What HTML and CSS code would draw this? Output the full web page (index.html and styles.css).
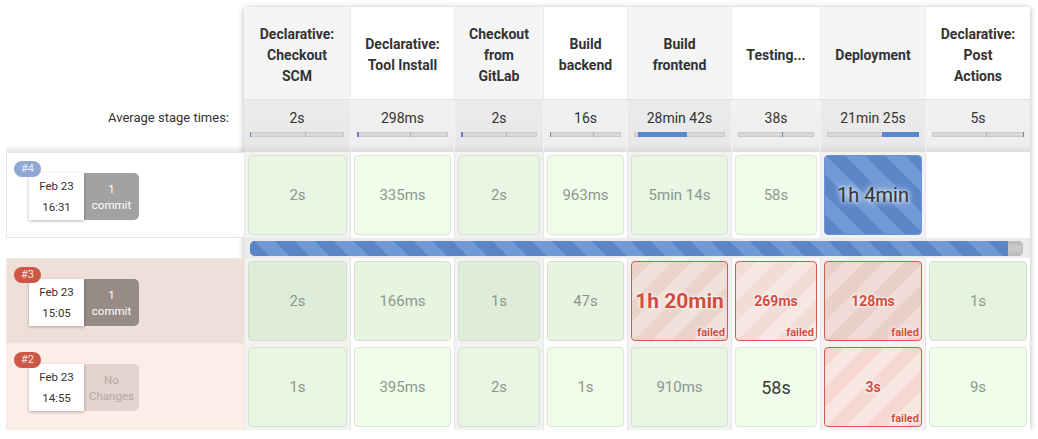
FILE: index.html
```html
<!DOCTYPE html>
<html lang="en">
<head>
<meta charset="utf-8">
<title>Stage View</title>
<link rel="stylesheet" href="styles.css">
</head>
<body>
<div class="page">
  <div class="side">
    <div class="side-head"></div>
    <div class="side-avg">Average stage times:</div>
    <div class="run run-running">
      <span class="badge badge-running">#4</span>
      <div class="date"><span>Feb 23</span><span>16:31</span></div>
      <div class="changes changes-running">1<br>commit</div>
    </div>
    <div class="side-gap"></div>
    <div class="run run-failed">
      <span class="badge badge-failed">#3</span>
      <div class="date"><span>Feb 23</span><span>15:05</span></div>
      <div class="changes changes-failed">1<br>commit</div>
    </div>
    <div class="run run-failed2">
      <span class="badge badge-failed">#2</span>
      <div class="date"><span>Feb 23</span><span>14:55</span></div>
      <div class="changes changes-none">No<br>Changes</div>
    </div>
  </div>

  <div class="stages">
    <div class="th odd">Declarative: Checkout SCM</div>
    <div class="th even">Declarative: Tool Install</div>
    <div class="th odd">Checkout from GitLab</div>
    <div class="th even">Build backend</div>
    <div class="th odd">Build frontend</div>
    <div class="th even">Testing...</div>
    <div class="th odd">Deployment</div>
    <div class="th even th-last">Declarative: Post Actions</div>

    <div class="avg odd"><span>2s</span><div class="bar"><i class="fill" style="left:0;width:1.5%"></i><i class="tick" style="left:58%"></i></div></div>
    <div class="avg even"><span>298ms</span><div class="bar"><i class="fill" style="left:0;width:2%"></i><i class="tick" style="left:58%"></i></div></div>
    <div class="avg odd"><span>2s</span><div class="bar"><i class="fill" style="left:0;width:2%"></i><i class="tick" style="left:59%"></i></div></div>
    <div class="avg even"><span>16s</span><div class="bar"><i class="fill" style="left:0;width:2%"></i><i class="tick" style="left:60%"></i></div></div>
    <div class="avg odd"><span>28min 42s</span><div class="bar"><i class="fill" style="left:4%;width:54%"></i></div></div>
    <div class="avg even"><span>38s</span><div class="bar"><i class="tick tick-blue" style="left:58%"></i></div></div>
    <div class="avg odd"><span>21min 25s</span><div class="bar"><i class="fill" style="left:60%;width:40%"></i></div></div>
    <div class="avg even"><span>5s</span><div class="bar"><i class="tick" style="left:59%"></i><i class="tick tick-blue" style="left:99%"></i></div></div>

    <div class="td odd"><div class="cell ok ok-a">2s</div></div>
    <div class="td even"><div class="cell ok ok-b">335ms</div></div>
    <div class="td odd"><div class="cell ok ok-a">2s</div></div>
    <div class="td even"><div class="cell ok ok-b">963ms</div></div>
    <div class="td odd"><div class="cell ok ok-a">5min 14s</div></div>
    <div class="td even"><div class="cell ok ok-b">58s</div></div>
    <div class="td odd"><div class="cell running">1h 4min</div></div>
    <div class="td even"></div>

    <div class="progress-row"><div class="progress"><div class="progress-fill"></div></div></div>

    <div class="td odd"><div class="cell ok ok-c">2s</div></div>
    <div class="td even"><div class="cell ok ok-d">166ms</div></div>
    <div class="td odd"><div class="cell ok ok-c">1s</div></div>
    <div class="td even"><div class="cell ok ok-d">47s</div></div>
    <div class="td odd"><div class="cell failed failed-a"><span class="big-fail">1h 20min</span><span class="failed-label">failed</span></div></div>
    <div class="td even"><div class="cell failed failed-b"><span>269ms</span><span class="failed-label">failed</span></div></div>
    <div class="td odd"><div class="cell failed failed-c"><span>128ms</span><span class="failed-label">failed</span></div></div>
    <div class="td even"><div class="cell ok ok-d2">1s</div></div>

    <div class="td odd"><div class="cell ok ok-a">1s</div></div>
    <div class="td even"><div class="cell ok ok-b">395ms</div></div>
    <div class="td odd"><div class="cell ok ok-a">2s</div></div>
    <div class="td even"><div class="cell ok ok-b">1s</div></div>
    <div class="td odd"><div class="cell ok ok-a">910ms</div></div>
    <div class="td even"><div class="cell ok ok-b slow">58s</div></div>
    <div class="td odd"><div class="cell failed failed-d"><span>3s</span><span class="failed-label">failed</span></div></div>
    <div class="td even"><div class="cell ok ok-b">9s</div></div>
  </div>
</div>
</body>
</html>
```

FILE: styles.css
```css
* { box-sizing: border-box; }

html, body {
  margin: 0;
  padding: 0;
  background: #fff;
  font-family: Roboto, "Liberation Sans", Arial, sans-serif;
  color: #333;
}

.page {
  display: flex;
  padding: 7px 0 0 6px;
}

/* ---------- left side ---------- */
.side {
  width: 238px;
  display: flex;
  flex-direction: column;
}
.side-head { height: 93px; }
.side-avg {
  height: 52px;
  text-align: right;
  font-size: 13px;
  line-height: 20px;
  padding: 8px 15px 0 0;
  background: linear-gradient(to bottom, rgba(0,0,0,0) 0, rgba(0,0,0,0) 88%, #e6e6e6 100%);
}
.side-gap { height: 20px; }

.run {
  position: relative;
  height: 86px;
  display: flex;
  align-items: flex-start;
  padding: 20px 0 0 22px;
  border: 1px solid #e6e6e6;
  border-right: none;
}
.run-running { background: #fff; }
.run-failed { background: #eee0d9; border-color: #f3e9e4; }
.run-failed2 { background: #fdede6; border-color: #f3e9e4; border-top: none; }

.badge {
  position: absolute;
  left: 7px;
  top: 8px;
  width: 27px;
  height: 16px;
  border-radius: 8px;
  font-size: 11px;
  line-height: 16px;
  text-align: center;
  color: #fff;
  z-index: 2;
}
.badge-running { background: #8fa7d3; color: #e8edf6; }
.badge-failed { background: #cd5747; color: #f6e3df; }

.date {
  width: 55px;
  height: 47px;
  background: #fff;
  box-shadow: 0 1px 3px rgba(0,0,0,0.3);
  display: flex;
  flex-direction: column;
  align-items: center;
  justify-content: center;
  font-size: 11.5px;
  line-height: 21px;
  color: #333;
  position: relative;
  z-index: 1;
}
.changes {
  width: 55px;
  height: 47px;
  border-radius: 0 5px 5px 0;
  display: flex;
  align-items: center;
  justify-content: center;
  text-align: center;
  font-size: 11.5px;
  line-height: 16px;
  color: #fff;
}
.changes-running { background: #a2a2a2; }
.changes-failed { background: #978b85; }
.changes-none { background: #e3d3cc; color: #b4a8a3; }

/* ---------- stage table ---------- */
.stages {
  display: grid;
  grid-template-columns: 106px 104px 89px 84px 104px 89px 105px 105px;
  grid-template-rows: 93px 52px 86px 20px 86px 86px;
  box-shadow: 0 1px 6px rgba(0,0,0,0.3);
  background: #fff;
}

.th {
  display: flex;
  align-items: center;
  justify-content: center;
  text-align: center;
  padding: 4px 10px 0 10px;
  font-weight: bold;
  font-size: 14px;
  line-height: 21px;
  color: #333;
  border-left: 1px solid #ececec;
  border-bottom: 1px solid #e2e2e2;
}
.th:first-child { border-left: none; }
.th.odd { background: #f5f5f5; }
.th.even { background: #fff; }
.th-last { padding: 4px 12px 0 12px; }

.avg {
  display: flex;
  flex-direction: column;
  align-items: stretch;
  padding-top: 8px;
  font-size: 14px;
  line-height: 20px;
  text-align: center;
  color: #333;
  border-left: 1px solid #f2f2f2;
}
.avg.odd { background: linear-gradient(to bottom, #ebebeb 0, #e8e8e8 85%, #d9d9d9 100%); }
.avg.even { background: linear-gradient(to bottom, #f1f1f1 0, #eeeeee 85%, #dedede 100%); }
.stages > .avg:nth-child(9) { border-left: none; }

.bar {
  position: relative;
  height: 5px;
  margin: 4px 6px 0 6px;
  background: #d9d9d9;
  box-shadow: inset 0 0 0 1px #c9c9c9;
}
.fill {
  position: absolute;
  top: 0;
  bottom: 0;
  background: #5b87d0;
}
.tick {
  position: absolute;
  top: 0;
  bottom: 0;
  width: 1px;
  background: #b3b3b3;
}
.tick-blue { background: #5b87d0; }

.td {
  padding: 3px;
  border-left: 1px solid #e6e6e6;
}
.td.odd { background: #f2f2f2; }
.td.even { background: #fff; }

.cell {
  position: relative;
  height: 100%;
  border: 1px solid;
  border-radius: 4px;
  display: flex;
  align-items: center;
  justify-content: center;
  font-size: 15px;
  color: #8f978d;
}
.ok-a { background: #e8f6e3; border-color: #d4e4ce; }
.ok-b { background: #f0fdea; border-color: #d9e7d3; }
.ok-c { background: #deedd9; border-color: #cfdfc9; }
.ok-d { background: #e6f4e0; border-color: #d3e2cd; }
.ok-d2 { background: #e4f2de; border-color: #d3e2cd; }
.slow { font-size: 18px; color: #3a3a3a; }

.running {
  border-color: #6d93d0;
  background: repeating-linear-gradient(45deg, #5b86c8 0, #5b86c8 14px, #729ad4 14px, #729ad4 28px);
  font-size: 20px;
  color: #333;
  text-shadow: 0 0 4px #fff, 0 0 8px #fff;
}

.failed {
  border-color: #d65a4a;
  font-size: 14px;
  font-weight: bold;
  color: #d14e3e;
  text-shadow: 0 0 4px #fff, 0 0 2px #fff;
}
.failed-a { background: repeating-linear-gradient(135deg, #ead3cb 0, #ead3cb 14px, #f0e0da 14px, #f0e0da 28px); }
.failed-b { background: repeating-linear-gradient(135deg, #f1dcd6 0, #f1dcd6 14px, #f5e7e2 14px, #f5e7e2 28px); }
.failed-c { background: repeating-linear-gradient(135deg, #e9cfc9 0, #e9cfc9 14px, #efdcd7 14px, #efdcd7 28px); }
.failed-d { background: repeating-linear-gradient(135deg, #f4d8d1 0, #f4d8d1 14px, #f8e6e1 14px, #f8e6e1 28px); }
.big-fail { font-size: 21px; }
.failed-label {
  position: absolute;
  right: 2px;
  bottom: 0;
  font-size: 11px;
  line-height: 14px;
}

.progress-row {
  grid-column: 1 / -1;
  background: #ebebeb;
  padding: 3px 7px 2px 6px;
}
.progress {
  height: 15px;
  border-radius: 5px;
  overflow: hidden;
  background: radial-gradient(ellipse at 80% 50%, #d2d2d2 0, #a9a9a9 100%);
  box-shadow: inset 0 0 0 1px #bdbdbd;
}
.progress-fill {
  width: 98%;
  height: 100%;
  background: repeating-linear-gradient(45deg, #5a86c8 0, #5a86c8 14px, #7199d3 14px, #7199d3 28px);
}
```
